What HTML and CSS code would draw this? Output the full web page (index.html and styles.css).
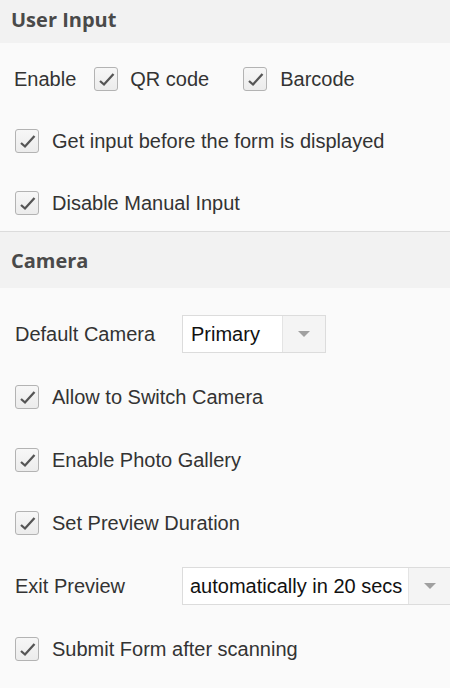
FILE: index.html
```html
<!DOCTYPE html>
<html>
<head>
<meta charset="utf-8">
<link rel="stylesheet" href="styles.css">
</head>
<body>
<div class="panel">
  <div class="head head-first">User Input</div>
  <div class="body body-user">
    <div class="row">
      <span class="txt">Enable</span>
      <span class="cb cb-enable"><svg viewBox="0 0 22 22"><polyline points="5,13 9,16.5 18.5,6"/></svg></span>
      <span class="txt">QR code</span>
      <span class="cb cb-bar"><svg viewBox="0 0 22 22"><polyline points="5,13 9,16.5 18.5,6"/></svg></span>
      <span class="txt">Barcode</span>
    </div>
    <div class="row">
      <span class="cb"><svg viewBox="0 0 22 22"><polyline points="5,13 9,16.5 18.5,6"/></svg></span>
      <span class="txt">Get input before the form is displayed</span>
    </div>
    <div class="row">
      <span class="cb"><svg viewBox="0 0 22 22"><polyline points="5,13 9,16.5 18.5,6"/></svg></span>
      <span class="txt">Disable Manual Input</span>
    </div>
  </div>
  <div class="head head-cam">Camera</div>
  <div class="body body-cam">
    <div class="row row-tall">
      <span class="label">Default Camera</span>
      <div class="select sel-short"><span class="val">Primary</span><span class="arrow"><i></i></span></div>
    </div>
    <div class="row row-tall">
      <span class="cb"><svg viewBox="0 0 22 22"><polyline points="5,13 9,16.5 18.5,6"/></svg></span>
      <span class="txt">Allow to Switch Camera</span>
    </div>
    <div class="row row-tall">
      <span class="cb"><svg viewBox="0 0 22 22"><polyline points="5,13 9,16.5 18.5,6"/></svg></span>
      <span class="txt">Enable Photo Gallery</span>
    </div>
    <div class="row row-tall">
      <span class="cb"><svg viewBox="0 0 22 22"><polyline points="5,13 9,16.5 18.5,6"/></svg></span>
      <span class="txt">Set Preview Duration</span>
    </div>
    <div class="row row-tall">
      <span class="label">Exit Preview</span>
      <div class="select sel-long"><span class="val">automatically in 20 secs</span><span class="arrow"><i></i></span></div>
    </div>
    <div class="row row-tall">
      <span class="cb"><svg viewBox="0 0 22 22"><polyline points="5,13 9,16.5 18.5,6"/></svg></span>
      <span class="txt">Submit Form after scanning</span>
    </div>
  </div>
</div>
</body>
</html>
```
FILE: styles.css
```css
html, body {
  margin: 0;
  padding: 0;
  background: #fafafa;
}
body {
  width: 450px;
  height: 688px;
  overflow: hidden;
  font-family: "Liberation Sans", Arial, sans-serif;
  color: #333;
}
.panel {
  display: flex;
  flex-direction: column;
}
.head {
  background: #f2f2f2;
  font-family: "Open Sans", sans-serif;
  font-weight: 700;
  font-size: 20px;
  color: #4a4a4a;
  padding-left: 11px;
  display: flex;
  align-items: center;
}
.head-first {
  height: 43px;
  padding-bottom: 4px;
  box-sizing: border-box;
}
.head-cam {
  height: 57px;
  border-top: 1px solid #dcdcdc;
  box-sizing: border-box;
}
.body {
  display: flex;
  flex-direction: column;
  padding-left: 15px;
}
.body-user {
  padding-top: 24px;
  padding-bottom: 16px;
  gap: 38px;
}
.body-cam {
  padding-top: 27px;
  gap: 25px;
}
.row {
  display: flex;
  align-items: center;
  height: 24px;
}
.row-tall {
  height: 38px;
}
.txt, .label {
  font-size: 20px;
  line-height: 24px;
  white-space: nowrap;
}
.cb {
  width: 24px;
  height: 24px;
  box-sizing: border-box;
  border: 1px solid #b3b3b3;
  border-radius: 3px;
  background: linear-gradient(#f7f7f7, #ececec);
  margin-right: 13px;
  flex: none;
  display: flex;
}
.cb svg {
  width: 22px;
  height: 22px;
  fill: none;
  stroke: #555;
  stroke-width: 2.3;
}
.body-user .row:first-child {
  margin-left: -1px;
}
.cb-enable {
  margin-left: 18px;
  margin-right: 12px;
}
.cb-bar {
  margin-left: 34px;
}
.label {
  width: 167px;
  flex: none;
}
.select {
  height: 38px;
  box-sizing: border-box;
  border: 1px solid #dcdcdc;
  background: #fff;
  display: flex;
  flex: none;
  overflow: hidden;
}
.sel-short {
  width: 144px;
}
.sel-long {
  width: 270px;
}
.val {
  flex: 1;
  min-width: 0;
  overflow: hidden;
  white-space: nowrap;
  padding-left: 8px;
  font-size: 20px;
  line-height: 36px;
  color: #111;
}
.sel-long .val {
  padding-left: 7px;
  padding-right: 5px;
}
.arrow {
  width: 42px;
  flex: none;
  border-left: 1px solid #e4e4e4;
  background: #f4f4f4;
  display: flex;
  align-items: center;
  justify-content: center;
}
.arrow i {
  width: 0;
  height: 0;
  border-left: 6px solid transparent;
  border-right: 6px solid transparent;
  border-top: 6px solid #a0a0a0;
}
```
